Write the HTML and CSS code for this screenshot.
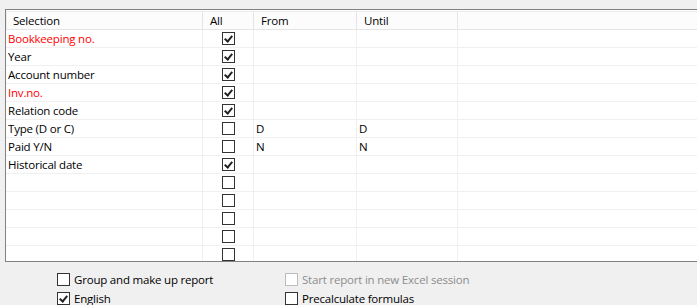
FILE: index.html
```html
<!DOCTYPE html>
<html lang="en">
<head>
    <meta charset="UTF-8">
    <title>Selection</title>
    <link rel="stylesheet" href="styles.css">
</head>
<body>
    <div class="grid">
        <div class="row head">
            <div class="cell">Selection</div>
            <div class="cell">All</div>
            <div class="cell">From</div>
            <div class="cell">Until</div>
            <div class="cell"></div>
        </div>
        <div class="row">
            <div class="cell red">Bookkeeping no.</div>
            <div class="cell mid"><span class="box checked"></span></div>
            <div class="cell"></div><div class="cell"></div><div class="cell"></div>
        </div>
        <div class="row">
            <div class="cell">Year</div>
            <div class="cell mid"><span class="box checked"></span></div>
            <div class="cell"></div><div class="cell"></div><div class="cell"></div>
        </div>
        <div class="row">
            <div class="cell">Account number</div>
            <div class="cell mid"><span class="box checked"></span></div>
            <div class="cell"></div><div class="cell"></div><div class="cell"></div>
        </div>
        <div class="row">
            <div class="cell red">Inv.no.</div>
            <div class="cell mid"><span class="box checked"></span></div>
            <div class="cell"></div><div class="cell"></div><div class="cell"></div>
        </div>
        <div class="row">
            <div class="cell">Relation code</div>
            <div class="cell mid"><span class="box checked"></span></div>
            <div class="cell"></div><div class="cell"></div><div class="cell"></div>
        </div>
        <div class="row">
            <div class="cell">Type (D or C)</div>
            <div class="cell mid"><span class="box"></span></div>
            <div class="cell">D</div><div class="cell">D</div><div class="cell"></div>
        </div>
        <div class="row">
            <div class="cell">Paid Y/N</div>
            <div class="cell mid"><span class="box"></span></div>
            <div class="cell">N</div><div class="cell">N</div><div class="cell"></div>
        </div>
        <div class="row">
            <div class="cell">Historical date</div>
            <div class="cell mid"><span class="box checked"></span></div>
            <div class="cell"></div><div class="cell"></div><div class="cell"></div>
        </div>
        <div class="row">
            <div class="cell"></div>
            <div class="cell mid"><span class="box"></span></div>
            <div class="cell"></div><div class="cell"></div><div class="cell"></div>
        </div>
        <div class="row">
            <div class="cell"></div>
            <div class="cell mid"><span class="box"></span></div>
            <div class="cell"></div><div class="cell"></div><div class="cell"></div>
        </div>
        <div class="row">
            <div class="cell"></div>
            <div class="cell mid"><span class="box"></span></div>
            <div class="cell"></div><div class="cell"></div><div class="cell"></div>
        </div>
        <div class="row">
            <div class="cell"></div>
            <div class="cell mid"><span class="box"></span></div>
            <div class="cell"></div><div class="cell"></div><div class="cell"></div>
        </div>
        <div class="row">
            <div class="cell"></div>
            <div class="cell mid"><span class="box"></span></div>
            <div class="cell"></div><div class="cell"></div><div class="cell"></div>
        </div>
    </div>

    <div class="options">
        <label class="opt"><span class="box"></span>Group and make up report</label>
        <label class="opt disabled"><span class="box"></span>Start report in new Excel session</label>
        <label class="opt"><span class="box checked"></span>English</label>
        <label class="opt"><span class="box"></span>Precalculate formulas</label>
    </div>
</body>
</html>
```

FILE: styles.css
```css
body {
    margin: 0;
    width: 697px;
    height: 305px;
    overflow: hidden;
    background-color: #f0f0f0;
    font-family: "Segoe UI", "Open Sans", "Liberation Sans", sans-serif;
    font-size: 11.5px;
    letter-spacing: -0.2px;
    color: #000;
}
.grid {
    margin: 9px 0 0 5px;
    width: 692px;
    height: 251px;
    overflow: hidden;
    background-color: #fff;
    border: 1px solid #828282;
    border-right: none;
}
.row {
    display: grid;
    grid-template-columns: 197px 51px 103px 101px 1fr;
    height: 17px;
    border-bottom: 1px solid #f0f0f0;
}
.cell {
    border-right: 1px solid #f0f0f0;
    padding-left: 2px;
    line-height: 17px;
    white-space: nowrap;
}
.head {
    height: 19px;
    border-bottom: 1px solid #e5e5e5;
    background-color: #fcfcfc;
}
.head .cell {
    margin-top: 1px;
    padding-left: 7px;
    border-right: 1px solid #e5e5e5;
    border-top: 1px solid #ececec;
    line-height: 17px;
}
.head .cell:first-child {
    border-left: 1px solid #ececec;
    padding-left: 6px;
}
.head .cell:last-child {
    border-right: none;
}
.red {
    color: #f00;
}
.mid {
    display: flex;
    justify-content: center;
    align-items: center;
    padding-left: 0;
}
.box {
    display: inline-block;
    box-sizing: border-box;
    width: 13px;
    height: 13px;
    border: 1px solid #333;
    background-color: #fff;
    position: relative;
}
.box.checked::after {
    content: "";
    position: absolute;
    left: 3px;
    top: 1px;
    width: 3px;
    height: 6px;
    border-right: 2px solid #222;
    border-bottom: 2px solid #222;
    transform: rotate(40deg);
}
.options {
    display: grid;
    grid-template-columns: 228px 250px;
    grid-auto-rows: 19px;
    padding: 11px 0 0 57px;
}
.opt {
    display: flex;
    align-items: center;
    height: 13px;
    white-space: nowrap;
}
.opt .box {
    margin-right: 4px;
}
.disabled {
    color: #8d8d8d;
}
.disabled .box {
    border-color: #bcbcbc;
}
```
